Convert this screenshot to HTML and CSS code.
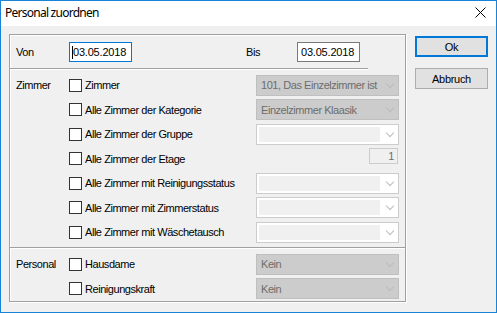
FILE: index.html
```html
<!DOCTYPE html>
<html lang="de">
<head>
<meta charset="utf-8">
<title>Personal zuordnen</title>
<link rel="stylesheet" href="styles.css">
</head>
<body>
<div class="window">
  <div class="titlebar">
    <span class="title">Personal zuordnen</span>
    <svg class="close" width="11" height="11" viewBox="0 0 11 11"><path d="M0.5 0.5 L10.5 10.5 M10.5 0.5 L0.5 10.5" stroke="#000" stroke-width="1" fill="none"/></svg>
  </div>
  <div class="client">
    <div class="group">
      <div class="daterow">
        <span class="lbl">Von</span>
        <span class="edit focus"><span class="caret"></span>03.05.2018</span>
        <span class="lbl bis">Bis</span>
        <span class="edit">03.05.2018</span>
      </div>
      <div class="sep short"></div>
      <div class="section zimmer">
        <div class="row">
          <span class="lbl">Zimmer</span>
          <label class="check"><span class="box"></span>Zimmer</label>
          <span class="combo disabled"><span class="txt">101, Das Einzelzimmer ist</span><span class="chev"></span></span>
        </div>
        <div class="row">
          <span class="lbl"></span>
          <label class="check"><span class="box"></span>Alle Zimmer der Kategorie</label>
          <span class="combo disabled"><span class="txt">Einzelzimmer Klaasik</span><span class="chev"></span></span>
        </div>
        <div class="row">
          <span class="lbl"></span>
          <label class="check"><span class="box"></span>Alle Zimmer der Gruppe</label>
          <span class="combo empty"><span class="field"></span><span class="chev"></span></span>
        </div>
        <div class="row">
          <span class="lbl"></span>
          <label class="check"><span class="box"></span>Alle Zimmer der Etage</label>
          <span class="numwrap"><span class="num">1</span></span>
        </div>
        <div class="row">
          <span class="lbl"></span>
          <label class="check"><span class="box"></span>Alle Zimmer mit Reinigungsstatus</label>
          <span class="combo empty"><span class="field"></span><span class="chev"></span></span>
        </div>
        <div class="row">
          <span class="lbl"></span>
          <label class="check"><span class="box"></span>Alle Zimmer mit Zimmerstatus</label>
          <span class="combo empty"><span class="field"></span><span class="chev"></span></span>
        </div>
        <div class="row">
          <span class="lbl"></span>
          <label class="check"><span class="box"></span>Alle Zimmer mit Wäschetausch</label>
          <span class="combo empty"><span class="field"></span><span class="chev"></span></span>
        </div>
      </div>
      <div class="sep"></div>
      <div class="section personal">
        <div class="row">
          <span class="lbl">Personal</span>
          <label class="check"><span class="box"></span>Hausdame</label>
          <span class="combo disabled"><span class="txt">Kein</span><span class="chev"></span></span>
        </div>
        <div class="row">
          <span class="lbl"></span>
          <label class="check"><span class="box"></span>Reinigungskraft</label>
          <span class="combo disabled"><span class="txt">Kein</span><span class="chev"></span></span>
        </div>
      </div>
    </div>
    <div class="buttons">
      <button class="btn default">Ok</button>
      <button class="btn">Abbruch</button>
    </div>
  </div>
</div>
</body>
</html>
```

FILE: styles.css
```css
* { box-sizing: border-box; }
html, body { margin: 0; padding: 0; }
body {
  width: 497px;
  height: 313px;
  overflow: hidden;
  background: #f0f0f0;
  font-family: "Liberation Sans", Arial, sans-serif;
  font-size: 11px;
  letter-spacing: -0.45px;
  color: #000;
}
.window {
  width: 497px;
  height: 313px;
  border: 1px solid #1883d7;
  background: #f0f0f0;
  display: flex;
  flex-direction: column;
}
.titlebar {
  height: 25px;
  background: #fff;
  display: flex;
  align-items: center;
  padding-left: 4px;
  padding-right: 10px;
  flex: none;
}
.title {
  font-family: "Noto Sans", "Open Sans", sans-serif;
  font-size: 12px;
  letter-spacing: -0.75px;
  flex: 1;
  position: relative;
  top: -1px;
}
.close { display: block; margin-top: -3px; }
.client {
  display: flex;
  align-items: flex-start;
  padding: 8px 0 0 8px;
}
.group {
  width: 397px;
  height: 268px;
  border: 1px solid #a0a0a0;
  box-shadow: inset 1px 1px 0 #fff, 1px 1px 0 #fff;
  display: flex;
  flex-direction: column;
}
.daterow {
  display: flex;
  align-items: center;
  height: 20px;
  margin-top: 7px;
  padding-left: 6px;
}
.lbl { width: 53px; flex: none; white-space: nowrap; }
.lbl.bis { width: 51px; margin-left: 114px; }
.edit {
  display: flex;
  align-items: center;
  width: 63px;
  height: 20px;
  border: 1px solid #7a7a7a;
  background: #fff;
  padding-left: 3px;
  letter-spacing: -0.2px;
}
.edit.focus { border-color: #0078d7; padding-left: 2px; }
.caret {
  display: inline-block;
  width: 1px;
  height: 13px;
  background: #000;
}
.sep {
  height: 2px;
  border-top: 1px solid #a0a0a0;
  border-bottom: 1px solid #fff;
  flex: none;
}
.sep.short { width: 358px; margin-top: 6px; }
.section.zimmer { padding-top: 3px; height: 177px; }
.section.personal { padding-top: 3px; }
.row {
  display: flex;
  align-items: center;
  height: 24.5px;
  padding-left: 6px;
}
.check {
  display: flex;
  align-items: center;
  width: 187px;
  flex: none;
  white-space: nowrap;
}
.box {
  width: 13px;
  height: 13px;
  border: 1px solid #333;
  background: #fff;
  margin-right: 3px;
  flex: none;
}
.combo {
  position: relative;
  display: flex;
  align-items: center;
  width: 143px;
  height: 21px;
  border: 1px solid #c4c4c4;
  white-space: nowrap;
  overflow: hidden;
}
.combo.disabled {
  background: #cccccc;
  border-color: #bfbfbf;
  color: #6d6d6d;
  padding-left: 4px;
}
.combo .txt {
  display: block;
  width: 122px;
  overflow: hidden;
}
.combo.empty {
  background: #fff;
  border-color: #cccccc;
  padding: 2px;
}
.combo .field {
  display: block;
  width: 121px;
  height: 100%;
  background: #f0f0f0;
}
.chev {
  position: absolute;
  right: 5px;
  top: 5px;
  width: 6px;
  height: 6px;
  border-right: 1px solid #bcbcbc;
  border-bottom: 1px solid #bcbcbc;
  transform: rotate(45deg);
}
.numwrap {
  width: 143px;
  display: flex;
  justify-content: flex-end;
}
.num {
  width: 29px;
  height: 16px;
  border: 1px solid #cccccc;
  background: #f0f0f0;
  color: #6d6d6d;
  text-align: right;
  padding-right: 3px;
  line-height: 14px;
  margin-right: 1px;
  margin-top: -6px;
}
.buttons {
  display: flex;
  flex-direction: column;
  gap: 11px;
  margin-left: 9px;
  margin-top: 2px;
}
.btn {
  width: 73px;
  height: 21px;
  border: 1px solid #adadad;
  background: #e1e1e1;
  font-family: "Liberation Sans", Arial, sans-serif;
  font-size: 11px;
  letter-spacing: -0.3px;
  color: #000;
  padding: 0;
  margin: 0;
}
.btn.default { border: 2px solid #0078d7; }
```
